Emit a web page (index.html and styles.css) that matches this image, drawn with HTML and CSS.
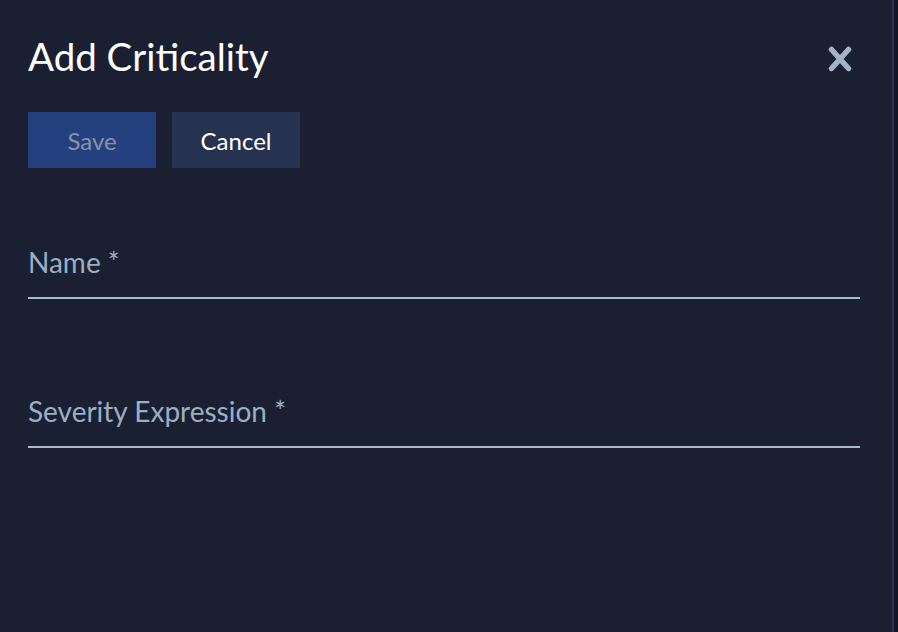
FILE: index.html
```html
<!DOCTYPE html>
<html lang="en">
<head>
  <meta charset="UTF-8" />
  <title>Add Criticality</title>
  <link rel="stylesheet" href="styles.css">
</head>
<body>

<div class="drawer">
  <!-- Header: title and close -->
  <div class="drawer-header">
    <h1>Add Criticality</h1>
    <button class="close" aria-label="Close">
      <svg width="26" height="26" viewBox="0 0 26 26">
        <path d="M4.5 3.5 L21.5 22.5 M21.5 3.5 L4.5 22.5" stroke="#a3b3c8" stroke-width="5.5" stroke-linecap="round"/>
      </svg>
    </button>
  </div>

  <div class="actions">
    <button class="btn btn-save" disabled>Save</button>
    <button class="btn btn-cancel">Cancel</button>
  </div>

  <form class="fields">
    <label class="field">
      <input type="text" placeholder="Name *">
    </label>
    <label class="field">
      <input type="text" placeholder="Severity Expression *">
    </label>
  </form>
</div>

</body>
</html>
```

FILE: styles.css
```css
html, body {
  margin: 0;
  height: 100%;
}
body {
  background-color: #111726;
  font-family: Lato, 'Open Sans', sans-serif;
}
.drawer {
  box-sizing: border-box;
  width: 894px;
  height: 100%;
  background-color: #1a2032;
  border-right: 2px solid #2b3552;
  padding: 32px 32px 0 28px;
}
.drawer-header {
  display: flex;
  align-items: center;
  justify-content: space-between;
}
h1 {
  margin: 0;
  color: #ffffff;
  font-weight: 400;
  font-size: 38.5px;
  line-height: 48px;
}
.close {
  background: none;
  border: none;
  padding: 0;
  margin-right: 7px;
  margin-top: 6px;
  cursor: pointer;
  display: flex;
}
.actions {
  display: flex;
  gap: 16px;
  margin-top: 32px;
}
.btn {
  width: 128px;
  height: 56px;
  border: none;
  border-radius: 0;
  font-family: inherit;
  font-size: 24px;
  cursor: pointer;
}
.btn-save {
  background-color: #25407f;
  color: #8a93a6;
  cursor: default;
}
.btn-cancel {
  background-color: #263350;
  color: #ffffff;
}
.fields {
  display: flex;
  flex-direction: column;
  gap: 95px;
  margin-top: 77px;
}
.field {
  display: block;
}
.field input {
  box-sizing: border-box;
  width: 100%;
  height: 54px;
  padding: 0 0 18px;
  background: transparent;
  border: none;
  border-bottom: 2px solid #a6bccd;
  color: #ffffff;
  font-family: inherit;
  font-size: 28px;
  outline: none;
}
.field input::placeholder {
  color: #9aaec4;
}
```
